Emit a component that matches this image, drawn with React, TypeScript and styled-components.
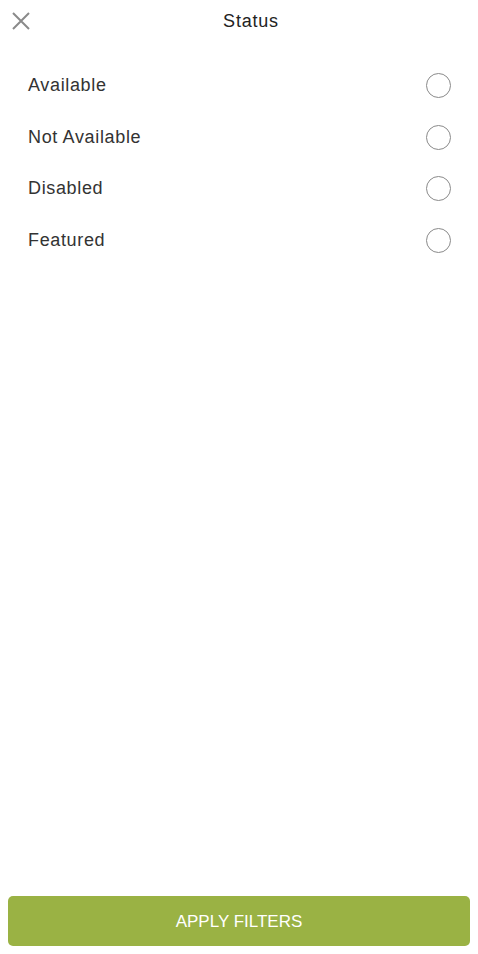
import React, { useState } from "react";
import styled, { createGlobalStyle } from "styled-components";

const GlobalStyle = createGlobalStyle`
  html, body {
    margin: 0;
    padding: 0;
    background: #fff;
  }
  body {
    font-family: "Liberation Sans", Arial, sans-serif;
    color: #333;
  }
`;

const Page = styled.div`
  display: flex;
  flex-direction: column;
  height: 954px;
  box-sizing: border-box;
`;

const Header = styled.header`
  position: relative;
  display: flex;
  align-items: center;
  justify-content: center;
  height: 42px;
`;

const CloseButton = styled.button`
  position: absolute;
  left: 8px;
  top: 8px;
  width: 26px;
  height: 26px;
  padding: 0;
  border: 0;
  background: none;
  display: flex;
  align-items: center;
  justify-content: center;
`;

const Title = styled.h1`
  margin: 0 0 0 24px;
  font-size: 18px;
  font-weight: 400;
  letter-spacing: 0.8px;
  color: #222;
`;

const List = styled.ul`
  list-style: none;
  margin: 0;
  padding: 18px 0 0;
  flex: 1;
`;

const Row = styled.li`
  display: flex;
  align-items: center;
  justify-content: space-between;
  height: 51.5px;
  padding: 0 27px 0 28px;
  cursor: pointer;
`;

const Label = styled.span`
  font-size: 18px;
  letter-spacing: 0.65px;
  color: #333;
`;

const Radio = styled.span<{ $checked: boolean }>`
  width: 25px;
  height: 25px;
  box-sizing: border-box;
  border-radius: 50%;
  border: 1.5px solid #8a8a8a;
  background: ${(p) => (p.$checked ? "radial-gradient(#9ab244 45%, transparent 50%)" : "none")};
`;

const Footer = styled.div`
  padding: 0 8px 8px;
`;

const ApplyButton = styled.button`
  width: 100%;
  height: 50px;
  border: 0;
  border-radius: 5px;
  background: #9ab244;
  color: #fff;
  font-family: "Liberation Sans", Arial, sans-serif;
  font-size: 17px;
  padding-top: 3px;
`;

const statuses = ["Available", "Not Available", "Disabled", "Featured"];

const App: React.FC = () => {
  const [selected, setSelected] = useState<string | null>(null);

  return (
    <Page>
      <GlobalStyle />
      <Header>
        <CloseButton aria-label="Close">
          <svg width="18" height="18" viewBox="0 0 18 18">
            <path d="M1 1 L17 17 M17 1 L1 17" stroke="#8a8a8a" strokeWidth="2" />
          </svg>
        </CloseButton>
        <Title>Status</Title>
      </Header>
      <List>
        {statuses.map((s) => (
          <Row key={s} onClick={() => setSelected(s)}>
            <Label>{s}</Label>
            <Radio $checked={selected === s} />
          </Row>
        ))}
      </List>
      <Footer>
        <ApplyButton>APPLY FILTERS</ApplyButton>
      </Footer>
    </Page>
  );
};

export default App;
